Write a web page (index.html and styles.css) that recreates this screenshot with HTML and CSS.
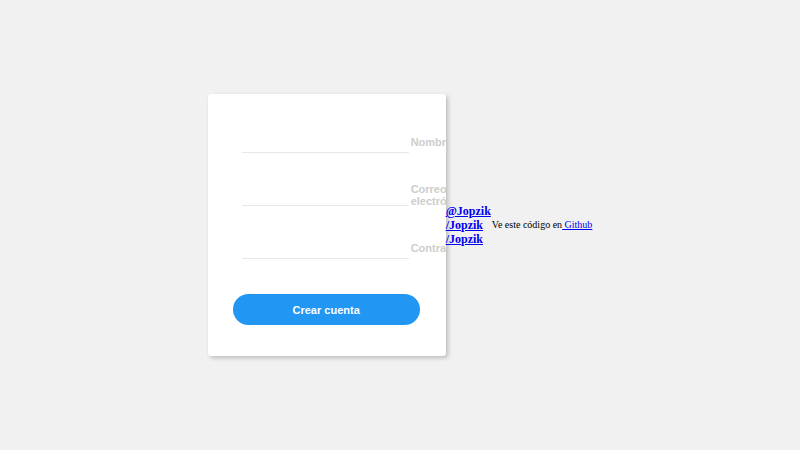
FILE: index.html
```html
<!DOCTYPE html>
<html lang="es">
<head>
<meta charset="utf-8">
<title>Crear cuenta</title>
<link rel="stylesheet" href="styles.css">
</head>
<body>
<main class="page">
  <form class="card">
    <div class="field">
      <input class="input" type="text">
      <label class="label">Nombre</label>
    </div>
    <div class="field">
      <input class="input" type="email">
      <label class="label">Correo electrónico</label>
    </div>
    <div class="field">
      <input class="input" type="password">
      <label class="label">Contraseña</label>
    </div>
    <button class="button" type="button">Crear cuenta</button>
  </form>
  <footer class="footer">
    <div class="social">
      <a href="#">@Jopzik</a>
      <a href="#">/Jopzik</a>
      <a href="#">/Jopzik</a>
    </div>
    <small class="source">Ve este código en<a href="#"> Github</a></small>
  </footer>
</main>
</body>
</html>
```
FILE: styles.css
```css
html, body {
  margin: 0;
  padding: 0;
  height: 100%;
}
body {
  background: #f1f1f1;
  font-family: "Liberation Serif", serif;
}
.page {
  height: 100%;
  display: flex;
  align-items: center;
  justify-content: center;
}
.card {
  width: 238px;
  box-sizing: border-box;
  background: #fff;
  border-radius: 3px;
  box-shadow: 2px 2px 4px rgba(0, 0, 0, 0.22);
  padding: 38px 0 31px 34px;
  overflow: hidden;
  font-family: "Liberation Sans", Arial, sans-serif;
}
.field {
  display: flex;
  align-items: center;
  height: 21px;
  margin-bottom: 32px;
}
.input {
  flex: 0 0 auto;
  box-sizing: border-box;
  width: 167px;
  height: 21px;
  border: none;
  border-bottom: 1px solid #e8e8e8;
  outline: none;
  padding: 0;
  background: transparent;
}
.label {
  flex: 0 0 auto;
  width: 62px;
  margin-left: 2px;
  margin-top: -2px;
  font-size: 11px;
  font-weight: bold;
  line-height: 12px;
  color: #cdcdcd;
}
.field:last-of-type {
  margin-bottom: 35px;
}
.button {
  display: block;
  width: 187px;
  height: 31px;
  margin-left: -9px;
  border: none;
  border-radius: 16px;
  background: #2196f3;
  color: #fff;
  font-family: "Liberation Sans", Arial, sans-serif;
  font-size: 11px;
  font-weight: bold;
}
.footer {
  display: flex;
  align-items: center;
  font-size: 12px;
  line-height: 14px;
}
.social {
  display: flex;
  flex-direction: column;
  font-weight: bold;
}
.social a {
  color: #0000ee;
}
.source {
  font-size: 10px;
  margin-left: 1px;
}
.source a {
  color: #0000ee;
}
```
